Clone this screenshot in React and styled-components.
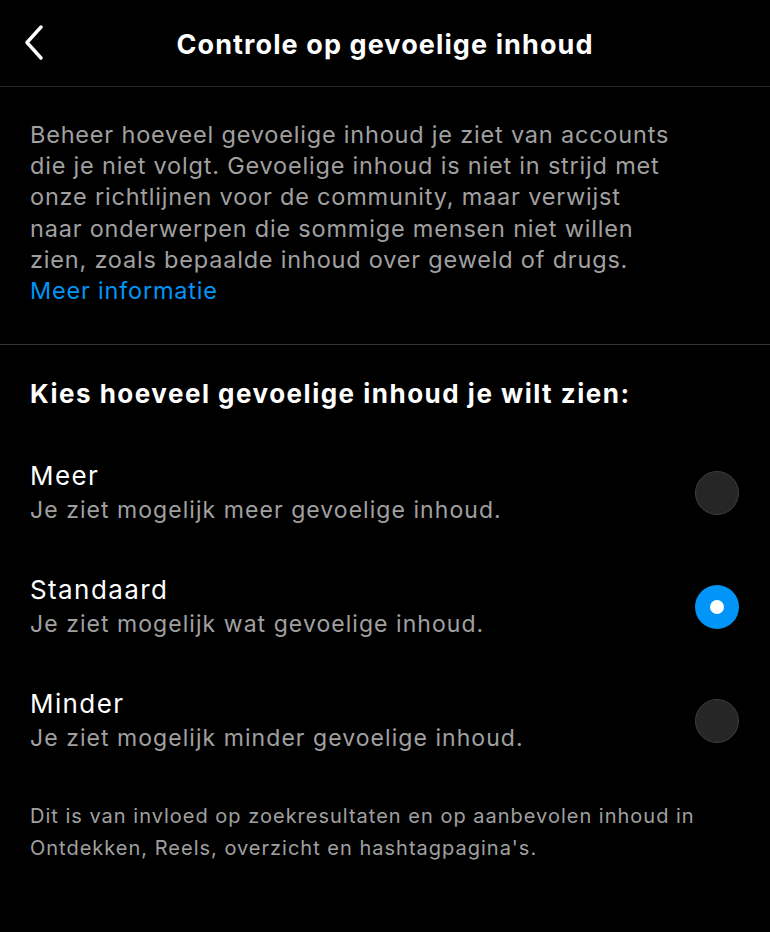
import React, { useState } from "react";
import styled, { createGlobalStyle } from "styled-components";

const Global = createGlobalStyle`
  html, body { margin: 0; padding: 0; background: #000; }
  body { font-family: Inter, "Noto Sans", "Liberation Sans", sans-serif; -webkit-font-smoothing: antialiased; }
  * { box-sizing: border-box; }
`;

const Page = styled.div`
  width: 770px;
  min-height: 932px;
  background: #000;
  color: #fff;
  display: flex;
  flex-direction: column;
`;

const Header = styled.header`
  height: 87px;
  border-bottom: 1px solid #262626;
  display: grid;
  grid-template-columns: 80px 1fr 80px;
  align-items: center;
`;

const BackButton = styled.button`
  background: none;
  border: 0;
  padding: 0 0 0 22px;
  height: 100%;
  display: flex;
  align-items: center;
  color: #fff;
  cursor: pointer;
`;

const Title = styled.h1`
  margin: 0;
  text-align: center;
  font-size: 27px;
  font-weight: 700;
  letter-spacing: 1.1px;
  padding-top: 3px;
`;

const Intro = styled.section`
  padding: 32px 30px 38px;
  border-bottom: 1px solid #363636;
`;

const Description = styled.p`
  margin: 0;
  color: #a0a0a0;
  font-size: 23.5px;
  line-height: 31.2px;
  letter-spacing: 0.8px;
  font-weight: 400;
`;

const Link = styled.a`
  color: #0095f6;
  text-decoration: none;
  display: block;
`;

const Choices = styled.section`
  padding: 29px 30px 0;
`;

const Heading = styled.h2`
  margin: 0 0 44px;
  font-size: 26px;
  font-weight: 700;
  line-height: 40px;
  letter-spacing: 1.5px;
`;

const OptionList = styled.div`
  display: flex;
  flex-direction: column;
  gap: 44px;
`;

const OptionRow = styled.label`
  display: flex;
  align-items: center;
  justify-content: space-between;
  cursor: pointer;
`;

const OptionText = styled.div`
  display: flex;
  flex-direction: column;
`;

const OptionTitle = styled.span`
  font-size: 26px;
  line-height: 35px;
  letter-spacing: 1.4px;
  color: #fff;
`;

const OptionSub = styled.span`
  font-size: 23px;
  line-height: 35px;
  letter-spacing: 1.05px;
  color: #a0a0a0;
`;

const Radio = styled.span`
  width: 44px;
  height: 44px;
  border-radius: 50%;
  flex: none;
  margin: 0 1px 1px 0;
  display: flex;
  align-items: center;
  justify-content: center;
  background: ${(p) => (p.$checked ? "#0095f6" : "#262626")};
  border: ${(p) => (p.$checked ? "none" : "1.5px solid #3d3d3d")};
  &::after {
    content: "";
    display: ${(p) => (p.$checked ? "block" : "none")};
    width: 14px;
    height: 14px;
    border-radius: 50%;
    background: #fff;
  }
`;

const Footnote = styled.p`
  margin: 44px 30px 0;
  color: #a0a0a0;
  font-size: 20px;
  line-height: 32px;
  letter-spacing: 1px;
`;

const options = [
  { key: "meer", title: "Meer", sub: "Je ziet mogelijk meer gevoelige inhoud." },
  { key: "standaard", title: "Standaard", sub: "Je ziet mogelijk wat gevoelige inhoud." },
  { key: "minder", title: "Minder", sub: "Je ziet mogelijk minder gevoelige inhoud." },
];

export default function App() {
  const [value, setValue] = useState("standaard");
  return (
    <Page>
      <Global />
      <Header>
        <BackButton aria-label="Terug">
          <svg width="24" height="36" viewBox="0 0 24 36" fill="none">
            <path d="M19 2 L5 17.5 L19 33" stroke="#fff" strokeWidth="3.4" strokeLinecap="round" strokeLinejoin="round" />
          </svg>
        </BackButton>
        <Title>Controle op gevoelige inhoud</Title>
        <div />
      </Header>
      <Intro>
        <Description>
          Beheer hoeveel gevoelige inhoud je ziet van accounts
          <br />
          die je niet volgt. Gevoelige inhoud is niet in strijd met
          <br />
          onze richtlijnen voor de community, maar verwijst
          <br />
          naar onderwerpen die sommige mensen niet willen
          <br />
          zien, zoals bepaalde inhoud over geweld of drugs.
          <Link href="#">Meer informatie</Link>
        </Description>
      </Intro>
      <Choices>
        <Heading>Kies hoeveel gevoelige inhoud je wilt zien:</Heading>
        <OptionList>
          {options.map((o) => (
            <OptionRow key={o.key} onClick={() => setValue(o.key)}>
              <OptionText>
                <OptionTitle>{o.title}</OptionTitle>
                <OptionSub>{o.sub}</OptionSub>
              </OptionText>
              <Radio $checked={value === o.key} />
            </OptionRow>
          ))}
        </OptionList>
      </Choices>
      <Footnote>
        Dit is van invloed op zoekresultaten en op aanbevolen inhoud in
        <br />
        Ontdekken, Reels, overzicht en hashtagpagina's.
      </Footnote>
    </Page>
  );
}
